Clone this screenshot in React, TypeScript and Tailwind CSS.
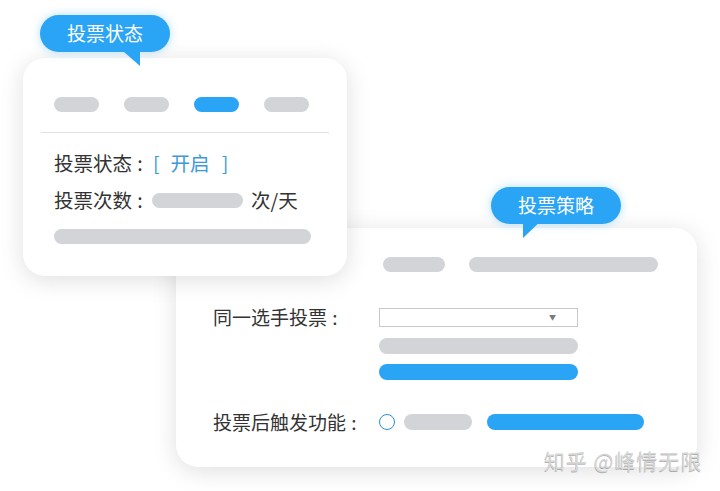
const font = { fontFamily: '"Noto Sans CJK SC", "Noto Sans", sans-serif' }

function Pill({ className }: { className: string }) {
  return <div className={`rounded-full ${className}`} />
}

function Colon() {
  return <span className="inline-block w-[16px] text-center">:</span>
}

function Badge({ label, tail }: { label: string; tail: 'left' | 'right' }) {
  return (
    <div className="relative w-[130px] h-[37px]">
      <div className="relative z-10 w-full h-full rounded-full bg-[#2aa4f4] shadow-[0_0_10px_rgba(42,164,244,0.35)] flex items-center justify-center text-white text-[19px]">
        {label}
      </div>
      {tail === 'right' ? (
        <svg className="absolute left-[76px] top-[30px] z-10" width="26" height="22" viewBox="0 0 26 22">
          <path d="M0 0 L24 0 L24 21 Z" fill="#2aa4f4" />
        </svg>
      ) : (
        <svg className="absolute left-[30px] top-[30px] z-10" width="26" height="22" viewBox="0 0 26 22">
          <path d="M2 0 L24 0 L2 21 Z" fill="#2aa4f4" />
        </svg>
      )}
    </div>
  )
}

export default function App() {
  return (
    <div className="relative w-[720px] h-[491px] bg-white overflow-hidden pt-[58px] pl-[23px] text-[#333]" style={font}>
      {/* card: 投票状态 */}
      <div className="relative z-10 w-[324px] h-[218px] rounded-[22px] bg-white shadow-[0_4px_24px_rgba(0,0,0,0.13)] pt-[39px]">
        <div className="absolute left-[17px] top-[-43px]">
          <Badge label="投票状态" tail="right" />
        </div>
        <div className="flex gap-[25px] px-[31px]">
          <Pill className="w-[45px] h-[15px] bg-[#d3d4d8]" />
          <Pill className="w-[45px] h-[15px] bg-[#d3d4d8]" />
          <Pill className="w-[45px] h-[15px] bg-[#2aa4f4]" />
          <Pill className="w-[45px] h-[15px] bg-[#d3d4d8]" />
        </div>
        <div className="mt-[20px] mx-[18px] h-px bg-[#e2e2e2]" />
        <div className="mt-[17px] px-[31px] h-[26px] flex items-center text-[19.5px]">
          <span>投票状态</span>
          <Colon />
          <span className="text-[#3d9ad6] ml-[5px]">[</span>
          <span className="text-[#3d9ad6] ml-[11px]">开启</span>
          <span className="text-[#3d9ad6] ml-[12px]">]</span>
        </div>
        <div className="mt-[11px] px-[31px] h-[26px] flex items-center text-[19.5px]">
          <span>投票次数</span>
          <Colon />
          <Pill className="ml-[4px] w-[91px] h-[15px] bg-[#d3d4d8]" />
          <span className="ml-[8px]">次/天</span>
        </div>
        <div className="mt-[16px] px-[31px]">
          <Pill className="w-[257px] h-[15px] bg-[#d3d4d8]" />
        </div>
      </div>

      {/* card: 投票策略 */}
      <div className="relative ml-[153px] -mt-[48px] w-[521px] h-[239px] rounded-[22px] bg-white shadow-[0_4px_24px_rgba(0,0,0,0.13)] pt-[29px]">
        <div className="absolute left-[315px] top-[-41px] z-20">
          <Badge label="投票策略" tail="left" />
        </div>
        <div className="flex gap-[24px] pl-[207px]">
          <Pill className="w-[62px] h-[15px] bg-[#d3d4d8]" />
          <Pill className="w-[189px] h-[15px] bg-[#d3d4d8]" />
        </div>
        <div className="mt-[36px] pl-[37px] flex">
          <div className="w-[166px] h-[19px] flex items-center text-[19px]">
            <span>同一选手投票</span>
            <Colon />
          </div>
          <div className="w-[199px] flex flex-col">
            <div className="h-[19px] border border-[#c9c9c9] flex items-center justify-end pr-[21px] text-[7px] text-[#7a7a7a]">▼</div>
            <Pill className="mt-[11px] w-full h-[16px] bg-[#d3d4d8]" />
            <Pill className="mt-[10px] w-full h-[16px] bg-[#2aa4f4]" />
          </div>
        </div>
        <div className="mt-[34px] pl-[37px] flex items-center h-[16px]">
          <div className="w-[166px] text-[19px] flex items-center">
            <span>投票后触发功能</span>
            <Colon />
          </div>
          <div className="w-[16px] h-[16px] rounded-full border-[1.5px] border-[#2a8fd6]" />
          <Pill className="ml-[9px] w-[68px] h-[16px] bg-[#d3d4d8]" />
          <Pill className="ml-[15px] w-[157px] h-[16px] bg-[#2aa4f4]" />
        </div>
      </div>

      <div className="absolute left-[544px] top-[445px] z-30 text-[21px] tracking-[1px] text-[#d6d6d6] [text-shadow:-0.5px_0.5px_0_rgba(0,0,0,0.28)]">
        知乎 @峰情无限
      </div>
    </div>
  )
}
